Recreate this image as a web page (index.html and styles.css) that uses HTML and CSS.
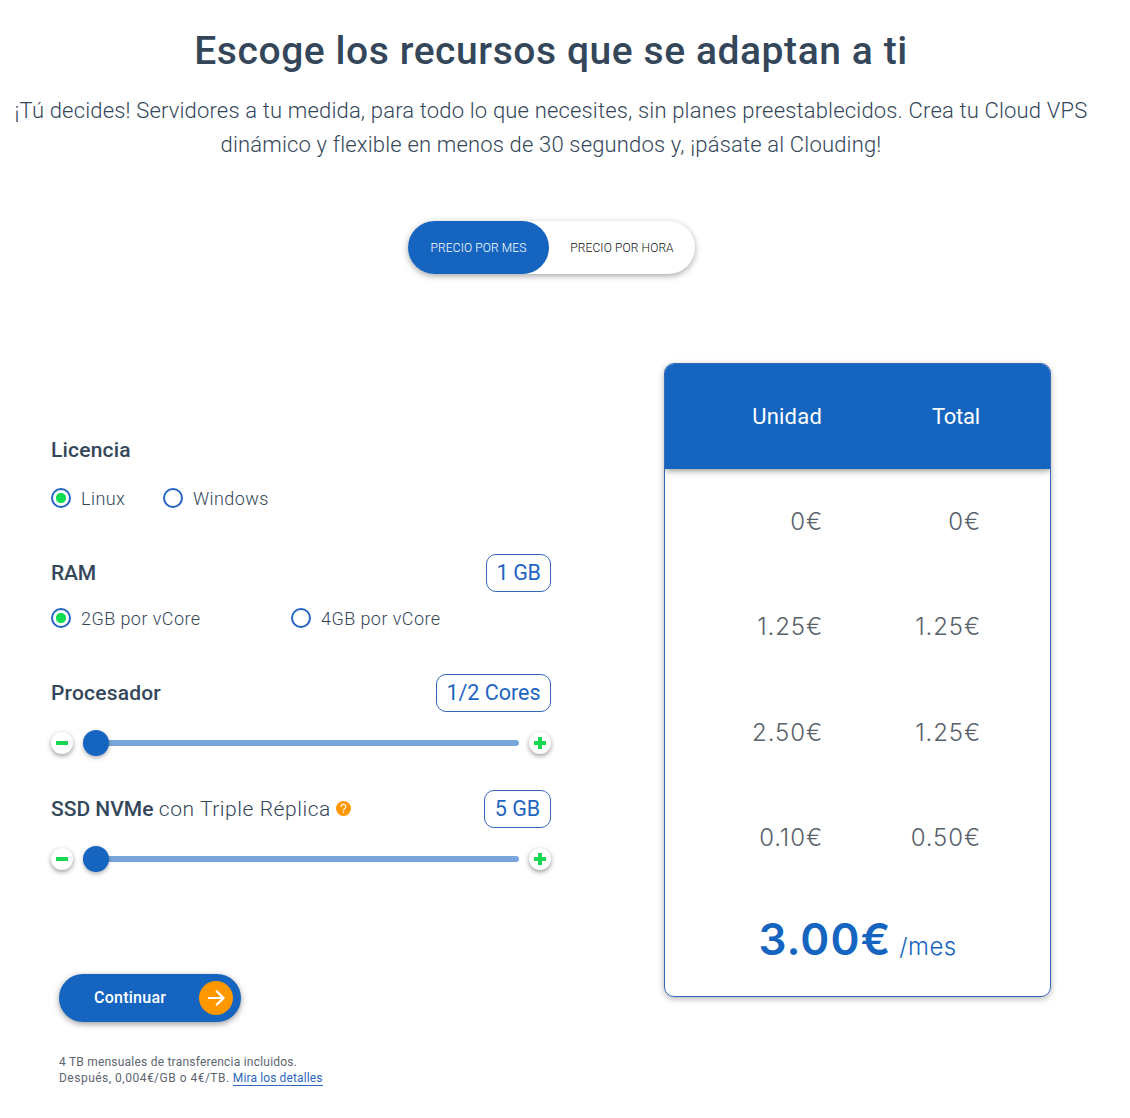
FILE: index.html
```html
<!DOCTYPE html>
<html lang="es">
<head>
<meta charset="utf-8">
<title>Escoge los recursos que se adaptan a ti</title>
<link rel="stylesheet" href="styles.css">
</head>
<body>
<main class="page">
  <header class="intro">
    <h1 class="title">Escoge los recursos que se adaptan a ti</h1>
    <p class="lead">¡Tú decides! Servidores a tu medida, para todo lo que necesites, sin planes preestablecidos. Crea tu Cloud VPS<br>dinámico y flexible en menos de 30 segundos y, ¡pásate al Clouding!</p>
  </header>
  <div class="toggle">
    <div class="toggle-item active"><span>PRECIO POR MES</span></div>
    <div class="toggle-item"><span>PRECIO POR HORA</span></div>
  </div>
  <div class="columns">
    <section class="config">
      <div class="group license">
        <div class="head"><h2 class="label">Licencia</h2></div>
        <div class="options">
          <div class="option"><i class="radio on"></i><span>Linux</span></div>
          <div class="option"><i class="radio"></i><span>Windows</span></div>
        </div>
      </div>
      <div class="group ram">
        <div class="head"><h2 class="label tight">RAM</h2><div class="value v-ram">1 GB</div></div>
        <div class="options wide">
          <div class="option"><i class="radio on"></i><span>2GB por vCore</span></div>
          <div class="option"><i class="radio"></i><span>4GB por vCore</span></div>
        </div>
      </div>
      <div class="group cpu">
        <div class="head"><h2 class="label">Procesador</h2><div class="value v-cpu">1/2 Cores</div></div>
        <div class="slider">
          <div class="step"><svg width="12" height="12" viewBox="0 0 12 12"><path d="M0 4h12v4H0z"/></svg></div>
          <div class="track"><div class="thumb"></div></div>
          <div class="step"><svg width="12" height="12" viewBox="0 0 12 12"><path d="M4 0h4v4h4v4H8v4H4V8H0V4h4z"/></svg></div>
        </div>
      </div>
      <div class="group ssd">
        <div class="head"><h2 class="label"><span class="strong">SSD NVMe</span> <span class="soft">con Triple Réplica</span></h2>
          <svg class="help" width="15" height="15" viewBox="0 0 15 15"><circle cx="7.5" cy="7.5" r="7.5" fill="#ff9800"/><path d="M5.2 6V5.6a2.3 2.3 0 1 1 3.6 1.8q-1.3.8-1.3 2M7.5 10.5v1.4" fill="none" stroke="#fff" stroke-width="1.2"/></svg>
          <div class="value v-ssd">5 GB</div></div>
        <div class="slider">
          <div class="step"><svg width="12" height="12" viewBox="0 0 12 12"><path d="M0 4h12v4H0z"/></svg></div>
          <div class="track"><div class="thumb"></div></div>
          <div class="step"><svg width="12" height="12" viewBox="0 0 12 12"><path d="M4 0h4v4h4v4H8v4H4V8H0V4h4z"/></svg></div>
        </div>
      </div>
      <div class="button"><span>Continuar</span>
        <svg width="34" height="34" viewBox="0 0 34 34"><circle cx="17" cy="17" r="17" fill="#ff9800"/><path d="M9 17h15M17.2 9.7l7.3 7.3-7.3 7.3" fill="none" stroke="#fff" stroke-width="2.2"/></svg>
      </div>
      <p class="note">4 TB mensuales de transferencia incluidos.<br><span class="rate">Después, 0,004€/GB o 4€/TB.</span> <a class="link">Mira los detalles</a></p>
    </section>
    <section class="prices">
      <div class="row top"><div>Unidad</div><div class="tight">Total</div></div>
      <div class="row"><div>0€</div><div>0€</div></div>
      <div class="row"><div>1.25€</div><div>1.25€</div></div>
      <div class="row"><div>2.50€</div><div>1.25€</div></div>
      <div class="row"><div>0.10€</div><div>0.50€</div></div>
      <div class="total"><span class="amount">3.00€</span><span class="per">/mes</span></div>
    </section>
  </div>
</main>
</body>
</html>
```
FILE: styles.css
```css
* { box-sizing: border-box; }
body { margin: 0; background: #fff; color: #34475a; font-family: Roboto, "Liberation Sans", sans-serif; font-weight: 300; }
h1, h2, p { margin: 0; }
.page { width: 1102px; height: 1118px; overflow: hidden; }
.intro { text-align: center; white-space: nowrap; padding-top: 27px; }
.title { font-size: 39px; line-height: 48px; font-weight: 500; letter-spacing: .57px; }
.lead { margin-top: 19px; font-size: 22px; line-height: 34px; letter-spacing: .17px; }
.toggle { display: flex; width: 287px; height: 53px; margin: 59px 0 0 408px; border-radius: 27px; box-shadow: 0 2px 6px rgba(0,0,0,.35); font-size: 12px; letter-spacing: .12px; color: #111; }
.toggle-item { flex: 1; display: flex; align-items: center; justify-content: center; white-space: nowrap; }
.toggle-item.active { flex: 0 0 141px; border-radius: 27px; background: #1565c0; color: #fff; }
.columns { display: flex; align-items: flex-start; margin-top: 89px; }
.config { width: 500px; margin: 68px 113px 0 51px; }
.head { display: flex; align-items: center; height: 38px; white-space: nowrap; }
.label { font-size: 21px; line-height: 38px; font-weight: 500; letter-spacing: .2px; }
.tight { letter-spacing: -.2px; }
.strong { letter-spacing: 0; }
.soft { font-weight: 300; letter-spacing: .55px; }
.value { margin-left: auto; height: 38px; border: 1px solid #3568b8; border-radius: 10px; display: flex; align-items: center; justify-content: center; padding-bottom: 1px; color: #1f65c0; font-size: 21.5px; font-weight: 400; }
.v-ram { width: 65px; letter-spacing: -.4px; }
.v-cpu { width: 115px; }
.v-ssd { width: 67px; }
.options { display: flex; gap: 38px; height: 20px; margin-top: 16px; font-size: 18px; line-height: 22px; letter-spacing: .43px; white-space: nowrap; }
.license .options { margin-top: 19px; }
.options.wide .option { width: 202px; }
.option { display: flex; gap: 10px; }
.license .option:first-child { width: 74px; }
.radio { flex: none; width: 20px; height: 20px; border: 2px solid #2464c0; border-radius: 50%; background: #fff; }
.radio.on { background: radial-gradient(circle, #12dc50 4.7px, #fff 5.5px); }
.ram { margin-top: 46px; }
.cpu { margin-top: 46px; }
.ssd { margin-top: 34px; }
.slider { display: flex; align-items: center; gap: 10px; height: 26px; margin-top: 18px; }
.step { flex: none; display: flex; align-items: center; justify-content: center; width: 22px; height: 22px; border-radius: 50%; background: #fff; box-shadow: 0 2px 5px rgba(0,0,0,.4); }
.step svg { fill: #16d850; }
.track { flex: 1; display: flex; align-items: center; height: 6px; border-radius: 3px; background: #78a6dc; }
.thumb { width: 26px; height: 26px; border-radius: 50%; background: #1565c0; box-shadow: 0 2px 4px rgba(0,0,0,.3); }
.help { margin: 0 0 2px 5px; }
.button { display: flex; align-items: center; justify-content: space-between; width: 182px; height: 48px; margin: 102px 0 0 8px; padding: 0 8px 0 35px; border-radius: 24px; background: #1565c0; box-shadow: 0 2px 6px rgba(0,0,0,.4); color: #fff; font-size: 16px; font-weight: 500; letter-spacing: .25px; }
.button span { padding-bottom: 2px; }
.note { margin: 32px 0 0 8px; font-size: 12px; line-height: 16px; font-weight: 400; letter-spacing: .22px; color: #5d6570; white-space: nowrap; }
.rate { letter-spacing: .49px; }
.link { color: #2c66bd; border-bottom: 1px solid #2c66bd; letter-spacing: .12px; }
.prices { width: 387px; height: 634px; border: 1px solid #3568b8; border-radius: 10px; overflow: hidden; box-shadow: 0 2px 6px rgba(0,0,0,.3); color: #59616b; font-family: Inter, "Liberation Sans", sans-serif; font-size: 24px; }
.row { display: grid; grid-template-columns: 158px 158px; height: 105.4px; align-items: center; text-align: right; padding-bottom: 1px; letter-spacing: .9px; }
.row.top { grid-template-columns: 157px 158px; padding-bottom: 0; background: #1565c0; color: #fff; font-family: Roboto, "Liberation Sans", sans-serif; font-size: 22px; font-weight: 400; letter-spacing: .2px; box-shadow: 0 1px 7px rgba(0,0,0,.5); }
.total { display: flex; align-items: baseline; justify-content: center; gap: 8px; color: #1565c0; line-height: 60px; padding-top: 18px; }
.amount { font-size: 44px; font-weight: 600; letter-spacing: 1px; }
.per { font-size: 24px; letter-spacing: .4px; }
```
